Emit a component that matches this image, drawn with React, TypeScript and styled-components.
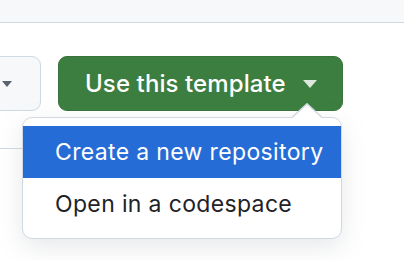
import React from "react";
import styled, { createGlobalStyle } from "styled-components";

const Global = createGlobalStyle`
  html, body { margin: 0; padding: 0; background: #ffffff; }
  body { font-family: Inter, "Noto Sans", "Liberation Sans", sans-serif; overflow: hidden; }
  * { box-sizing: border-box; }
`;

const Page = styled.div`
  width: 404px;
  height: 260px;
  position: relative;
  overflow: hidden;
  background: #ffffff;
`;

const TopBar = styled.div`
  height: 23px;
  background: #f6f8fa;
  border-bottom: 1px solid #d1d9e0;
`;

const ActionRow = styled.div`
  display: flex;
  align-items: center;
  gap: 17px;
  margin-top: 33px;
`;

const SecondaryButton = styled.div`
  width: 60px;
  height: 55px;
  margin-left: -19px;
  display: flex;
  align-items: center;
  justify-content: flex-end;
  padding-right: 28px;
  background: #f6f8fa;
  border: 1.5px solid #d1d9e0;
  border-radius: 9px;
`;

const Caret = styled.span<{ $color: string; $w: number; $h: number }>`
  display: block;
  width: 0;
  height: 0;
  border-left: ${(p) => p.$w / 2}px solid transparent;
  border-right: ${(p) => p.$w / 2}px solid transparent;
  border-top: ${(p) => p.$h}px solid ${(p) => p.$color};
`;

const MenuAnchor = styled.div`
  position: relative;
`;

const PrimaryButton = styled.div`
  width: 285px;
  height: 55px;
  display: flex;
  align-items: center;
  padding: 0 26px;
  gap: 17px;
  background: #3c7e40;
  border: 1px solid #37733a;
  border-radius: 9px;
  color: #ffffff;
  font-size: 24px;
  font-weight: 500;
  letter-spacing: 0.1px;
  white-space: nowrap;
`;

const ButtonLabel = styled.span`
  flex: 1;
`;

const ContentEdge = styled.div`
  width: 200px;
  margin-top: 37px;
  border-top: 1px solid #d1d9e0;
`;

const Menu = styled.div`
  position: absolute;
  left: -36px;
  top: 61px;
  width: 320px;
  padding: 8px 0;
  background: #ffffff;
  border: 1.5px solid #d1d9e0;
  border-radius: 10px;
  box-shadow: 0 8px 24px rgba(140, 149, 159, 0.22);
  z-index: 2;
`;

const MenuPointer = styled.svg`
  position: absolute;
  left: 234px;
  top: 47px;
  z-index: 3;
  display: block;
`;

const MenuItem = styled.div<{ $active?: boolean }>`
  height: 52px;
  display: flex;
  align-items: center;
  padding-left: 32px;
  font-size: 23px;
  font-weight: 400;
  letter-spacing: 0.35px;
  white-space: nowrap;
  color: ${(p) => (p.$active ? "#ffffff" : "#1f2328")};
  background: ${(p) => (p.$active ? "#266cd7" : "transparent")};
`;

export default function App() {
  return (
    <Page>
      <Global />
      <TopBar />
      <ActionRow>
        <SecondaryButton>
          <Caret $color="#59636e" $w={11} $h={6} />
        </SecondaryButton>
        <MenuAnchor>
          <PrimaryButton>
            <ButtonLabel>Use this template</ButtonLabel>
            <Caret $color="rgba(255,255,255,0.82)" $w={15} $h={8} />
          </PrimaryButton>
          <MenuPointer width="30" height="17" viewBox="0 0 30 17">
            <polygon points="0,15 15,0.8 30,15 30,17 0,17" fill="#ffffff" />
            <polyline points="0,14.5 15,0.8 30,14.5" fill="none" stroke="#d1d9e0" strokeWidth="1.5" />
          </MenuPointer>
          <Menu>
            <MenuItem $active>Create a new repository</MenuItem>
            <MenuItem>Open in a codespace</MenuItem>
          </Menu>
        </MenuAnchor>
      </ActionRow>
      <ContentEdge />
    </Page>
  );
}
